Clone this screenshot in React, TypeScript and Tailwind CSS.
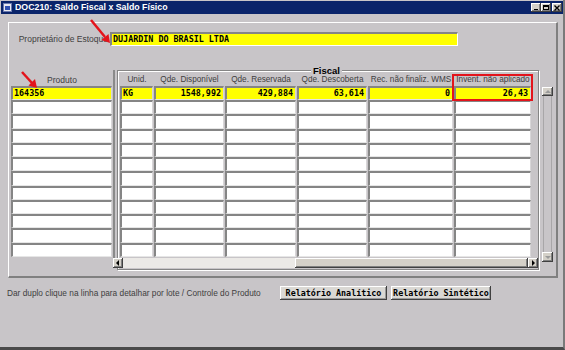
import React from "react";

const SANS = { fontFamily: '"Liberation Sans", Arial, sans-serif' };
const MONO = { fontFamily: '"DejaVu Sans Mono", "Liberation Mono", monospace' };

const rowH = [
  "h-[14px]", "h-[14px]", "h-[15px]", "h-[14px]", "h-[14px]", "h-[14px]",
  "h-[15px]", "h-[14px]", "h-[14px]", "h-[14px]", "h-[15px]", "h-[14px]",
];

const cols = [
  { w: "w-[34px]", label: "Unid.", val: "KG", right: false },
  { w: "w-[71px]", label: "Qde. Disponível", val: "1548,992", right: true },
  { w: "w-[72px]", label: "Qde. Reservada", val: "429,884", right: true },
  { w: "w-[71px]", label: "Qde. Descoberta", val: "63,614", right: true },
  { w: "w-[86px]", label: "Rec. não finaliz. WMS", val: "0", right: true },
  { w: "w-[78px]", label: "Invent. não aplicado", val: "26,43", right: true },
];

function Cell({ yellow, right, text }: { yellow?: boolean; right?: boolean; text?: string }) {
  return (
    <div className="h-full pr-[1px]">
      <div
        className={`h-full border-t-2 border-l-2 border-r border-b border-t-[#858585] border-l-[#858585] border-r-[#d8d6d8] border-b-[#e6e6e6] flex items-center overflow-hidden ${
          yellow ? "bg-[#ffff00]" : "bg-white"
        } ${right ? "justify-end pr-[2px]" : "justify-start pl-[1px]"}`}
      >
        {text ? (
          <span className="text-[8.4px] font-bold text-black leading-none whitespace-pre" style={MONO}>
            {text}
          </span>
        ) : null}
      </div>
    </div>
  );
}

const raised =
  "bg-[#d4d0c8] shadow-[inset_-1px_-1px_0_#404040,inset_1px_1px_0_#ffffff,inset_-2px_-2px_0_#808080]";

function Tri({ dir, gray }: { dir: "l" | "r" | "u" | "d"; gray?: boolean }) {
  const pts =
    dir === "l" ? "5,1 5,7 2,4" : dir === "r" ? "3,1 3,7 6,4" : dir === "u" ? "1,5 7,5 4,2" : "1,3 7,3 4,6";
  return (
    <svg width="8" height="8" viewBox="0 0 8 8">
      <polygon points={pts} fill={gray ? "#9a9a9a" : "#000"} />
    </svg>
  );
}

export default function App() {
  return (
    <div
      className="relative w-[565px] h-[350px] overflow-hidden bg-[#c8c5c8] pt-[1px] pl-[1px] border-r-2 border-b-[3px] border-r-[#7a7a7a] border-b-[#4a4a4a]"
      style={SANS}
    >
      {/* Title bar */}
      <div className="w-[562px] h-[13px] bg-[#0a246a] flex items-center">
        <div className="ml-[2px] w-[9px] h-[9px] bg-[#e8e8f0] border border-[#6a7ab0] flex items-center justify-center">
          <div className="w-[5px] h-[4px] bg-[#3050b0]" />
        </div>
        <span className="ml-[3px] text-[8.8px] font-bold text-white leading-none">
          DOC210: Saldo Fiscal x Saldo Físico
        </span>
        <div className="ml-auto mr-[1px] flex items-center">
          <div className={`w-[10px] h-[9px] ${raised} flex items-end justify-center pb-[2px]`}>
            <div className="w-[4px] h-[1.5px] bg-black" />
          </div>
          <div className={`w-[10px] h-[9px] ${raised} flex items-center justify-center`}>
            <div className="w-[6px] h-[5px] border border-black border-t-2" />
          </div>
          <div className={`ml-[1px] w-[10px] h-[9px] ${raised} flex items-center justify-center`}>
            <svg width="6" height="6" viewBox="0 0 6 6">
              <path d="M0.5 0.5 L5.5 5.5 M5.5 0.5 L0.5 5.5" stroke="#000" strokeWidth="1.4" />
            </svg>
          </div>
        </div>
      </div>

      {/* Main panel */}
      <div className="mt-[8px] ml-[7px] w-[550px] h-[256px] border-t border-l border-t-white border-l-white border-r-2 border-b-2 border-r-[#808080] border-b-[#808080]">
        {/* Proprietario row */}
        <div className="mt-[9px] flex items-center h-[14px]">
          <div className="w-[100px] text-right pr-[1px] text-[8.5px] text-[#404040] leading-none whitespace-nowrap">
            Proprietário de Estoque
          </div>
          <div className="ml-[1px] w-[348px] h-[14px] bg-[#ffff00] border-t-2 border-l-2 border-t-[#858585] border-l-[#858585] border-r border-b border-r-white border-b-white flex items-center pl-[1px]">
            <span className="text-[8.4px] font-bold text-black leading-none" style={MONO}>
              DUJARDIN DO BRASIL LTDA
            </span>
          </div>
        </div>

        {/* Table area */}
        <div className="mt-[24px] flex items-start">
          {/* Produto column */}
          <div className="ml-[2px] w-[102px] flex flex-col">
            <div className="h-[16px] flex items-end justify-center pb-[2px] text-[8.5px] text-[#404040] leading-none">
              Produto
            </div>
            {rowH.map((h, i) => (
              <div key={i} className={h}>
                <Cell yellow={i === 0} text={i === 0 ? "164356" : undefined} />
              </div>
            ))}
          </div>
          {/* separator */}
          <div className="w-[2px] h-[188px] bg-[#8a8a8a]" />
          {/* Fiscal group box */}
          <div className="relative ml-[2px] w-[422px] h-[200px] border border-[#858585] shadow-[inset_1px_1px_0_#ffffff,1px_1px_0_#ffffff] flex flex-col pb-[1px]">
            <div className="absolute left-[193px] top-[-6px] px-[2px] bg-[#c8c5c8] text-[9.5px] font-bold text-black leading-[11px]">
              Fiscal
            </div>
            <div className="pl-[2px] flex flex-col">
              <div className="h-[15px] flex">
                {cols.map((c, i) => (
                  <div
                    key={i}
                    className={`${c.w} flex items-end justify-center pb-[2px] text-[8.2px] text-[#404040] leading-none whitespace-nowrap overflow-hidden`}
                  >
                    {c.label}
                  </div>
                ))}
              </div>
              {rowH.map((h, r) => (
                <div key={r} className={`${h} flex`}>
                  {cols.map((c, i) => (
                    <div key={i} className={`${c.w} h-full`}>
                      <Cell yellow={r === 0} right={c.right} text={r === 0 ? c.val : undefined} />
                    </div>
                  ))}
                </div>
              ))}
            </div>
            {/* Horizontal scrollbar */}
            <div className="mt-[1px] -ml-[5px] w-[425px] h-[10px] flex">
              <div className={`w-[10px] h-[10px] ${raised} flex items-center justify-center`}>
                <Tri dir="l" />
              </div>
              <div className="w-[172px] h-[10px] bg-[#ebe9e6]" />
              <div className={`flex-1 h-[10px] ${raised}`} />
              <div className={`w-[10px] h-[10px] ${raised} flex items-center justify-center`}>
                <Tri dir="r" />
              </div>
            </div>
          </div>
          {/* Vertical scrollbar */}
          <div className="ml-[3px] mt-[17px] w-[11px] h-[175px] flex flex-col">
            <div className={`w-[11px] h-[9px] ${raised} flex items-center justify-center`}>
              <Tri dir="u" gray />
            </div>
            <div className="flex-1 mx-[1px] border-l border-r border-l-[#a8a6a8] border-r-[#a8a6a8] bg-[#c8c5c8]" />
            <div className={`w-[11px] h-[10px] ${raised} flex items-center justify-center`}>
              <Tri dir="d" gray />
            </div>
          </div>
        </div>
      </div>

      {/* Footer */}
      <div className="mt-[8px] flex items-center h-[14px]">
        <div className="ml-[6px] w-[273px] text-[8.3px] text-[#404040] leading-none whitespace-nowrap">
          Dar duplo clique na linha para detalhar por lote / Controle do Produto
        </div>
        <div className="w-[107px] h-[14px] bg-[#dad8d4] shadow-[inset_-1px_-1px_0_#404040,inset_1px_1px_0_#ffffff,inset_-2px_-2px_0_#9a9a9a] flex items-center justify-center">
          <span className="text-[8.4px] font-bold text-black leading-none" style={MONO}>
            Relatório Analítico
          </span>
        </div>
        <div className="ml-[4px] w-[100px] h-[14px] bg-[#dad8d4] shadow-[inset_-1px_-1px_0_#404040,inset_1px_1px_0_#ffffff,inset_-2px_-2px_0_#9a9a9a] flex items-center justify-center">
          <span className="text-[8.4px] font-bold text-black leading-none" style={MONO}>
            Relatório Sintético
          </span>
        </div>
      </div>

      {/* Red highlight box */}
      <div className="absolute left-[452px] top-[74px] w-[81px] h-[27px] border-2 border-[#e3141c]" />

      {/* Red arrows */}
      <svg className="absolute left-0 top-0 pointer-events-none" width="565" height="350">
        <line x1="91" y1="20" x2="105" y2="37" stroke="#e3141c" strokeWidth="2.5" />
        <polygon points="110,43 101.5,40 108.5,34" fill="#e3141c" />
        <line x1="22" y1="72" x2="32" y2="83" stroke="#e3141c" strokeWidth="2.5" />
        <polygon points="37,88 28.5,85.5 35,79" fill="#e3141c" />
      </svg>
    </div>
  );
}
